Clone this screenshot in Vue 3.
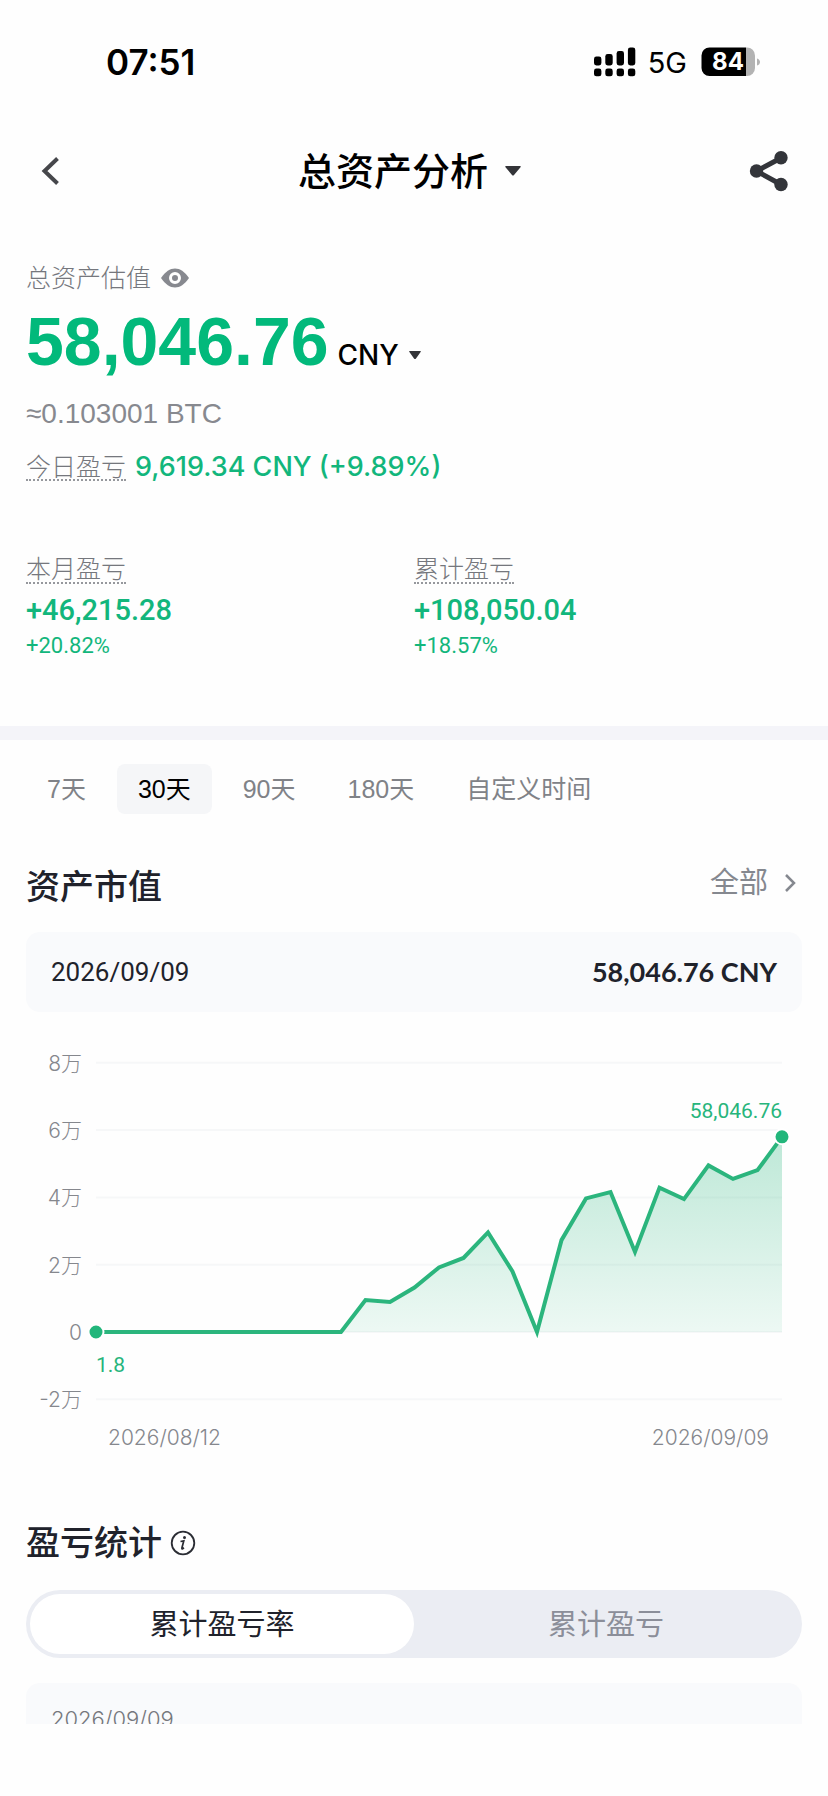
<script setup>
import { ref, computed } from 'vue'

const ranges = ['7天', '30天', '90天', '180天', '自定义时间']
const activeRange = ref('30天')

const modes = ['累计盈亏率', '累计盈亏']
const activeMode = ref('累计盈亏率')

const stats = [
  { label: '本月盈亏', value: '+46,215.28', percent: '+20.82%' },
  { label: '累计盈亏', value: '+108,050.04', percent: '+18.57%' }
]

// 每日资产市值，单位：万
const values = [
  0, 0, 0, 0, 0, 0, 0, 0, 0, 0, 0, 0.95, 0.89, 1.32, 1.92, 2.2, 2.96, 1.8, 0,
  2.73, 3.97, 4.16, 2.38, 4.29, 3.95, 4.95, 4.55, 4.81, 5.8
]

const ticks = [8, 6, 4, 2, 0, -2]
const left = 70
const right = 756
const zeroY = 292

const toX = (i) => left + ((right - left) * i) / (values.length - 1)
const toY = (v) => zeroY - v * 33.65
const tickLabel = (v) => (v === 0 ? '0' : v + '万')

const line = computed(() => values.map((v, i) => `${toX(i)},${toY(v)}`).join(' '))
const area = computed(() => `${left},${zeroY} ${line.value} ${right},${zeroY}`)
</script>

<template>
  <div class="page">
    <div class="status-bar">
      <span class="time">07:51</span>
      <div class="status-right">
        <svg class="signal" width="42" height="30" viewBox="0 0 42 30">
          <rect x="0" y="9.5" width="7.4" height="9" rx="2.4" />
          <rect x="11.3" y="7" width="7.4" height="11.5" rx="2.4" />
          <rect x="22.6" y="4" width="7.4" height="14.5" rx="2.4" />
          <rect x="33.9" y="0.5" width="7.4" height="18" rx="2.4" />
          <rect x="0" y="21.5" width="7.4" height="7.8" rx="2.4" />
          <rect x="11.3" y="21.5" width="7.4" height="7.8" rx="2.4" />
          <rect x="22.6" y="21.5" width="7.4" height="7.8" rx="2.4" />
          <rect x="33.9" y="21.5" width="7.4" height="7.8" rx="2.4" />
        </svg>
        <span class="network">5G</span>
        <svg class="battery" width="60" height="30" viewBox="0 0 60 30">
          <path d="M45 0.5h1a8 8 0 0 1 8 8v12.5a8 8 0 0 1-8 8h-1z" fill="#b3b3b3" />
          <path d="M8.5 0.5H45v28.5H8.5a8 8 0 0 1-8-8V8.5a8 8 0 0 1 8-8z" fill="#000" />
          <path d="M56 11.5c4 1 4 6 0 7z" fill="#b3b3b3" />
          <text x="27" y="23" text-anchor="middle" class="battery-text">84</text>
        </svg>
      </div>
    </div>

    <header class="nav">
      <button class="icon-btn back" aria-label="返回">
        <svg width="20" height="30" viewBox="0 0 20 30">
          <path d="M17.5 2.5L4.5 15l13 12.5" fill="none" stroke="#46474b" stroke-width="4" />
        </svg>
      </button>
      <button class="nav-title">
        <span>总资产分析</span>
        <svg width="16" height="10" viewBox="0 0 16 10">
          <path d="M1 0h14q1.5 0 0.5 1.2L9 9q-1 1-2 0L0.5 1.2Q-0.5 0 1 0z" fill="#333438" />
        </svg>
      </button>
      <button class="icon-btn" aria-label="分享">
        <svg width="40" height="42" viewBox="0 0 40 42">
          <path d="M32 8L7.5 21 32 34.5" fill="none" stroke="#33353a" stroke-width="5" />
          <circle cx="7.5" cy="21" r="6.7" fill="#33353a" />
          <circle cx="32" cy="7.7" r="6.7" fill="#33353a" />
          <circle cx="32" cy="34.5" r="6.7" fill="#33353a" />
        </svg>
      </button>
    </header>

    <section class="summary">
      <div class="summary-label">
        <span>总资产估值</span>
        <button class="icon-btn" aria-label="隐藏金额">
          <svg width="28" height="20" viewBox="0 0 28 20">
            <path
              d="M0 10C4.5 3.5 9 0.5 14 0.5S23.5 3.5 28 10C23.5 16.5 19 19.5 14 19.5S4.5 16.5 0 10z"
              fill="#87898f"
            />
            <circle cx="14" cy="10" r="4.5" fill="#87898f" stroke="#fff" stroke-width="3" />
          </svg>
        </button>
      </div>
      <div class="total">
        <span class="total-value">58,046.76</span>
        <button class="currency">
          <span>CNY</span>
          <svg width="12" height="9" viewBox="0 0 12 9">
            <path d="M0.8 0h10.4q1.2 0 0.4 1L7 7.5q-1 1-2 0L0.4 1Q-0.4 0 0.8 0z" fill="#333438" />
          </svg>
        </button>
      </div>
      <div class="btc">≈0.103001 BTC</div>
      <div class="today">
        <span class="dotted">今日盈亏</span>
        <span class="today-value">9,619.34 CNY (+9.89%)</span>
      </div>
      <div class="stats">
        <div v-for="item in stats" :key="item.label" class="stat">
          <span class="dotted">{{ item.label }}</span>
          <div class="stat-value">{{ item.value }}</div>
          <div class="stat-percent">{{ item.percent }}</div>
        </div>
      </div>
    </section>

    <div class="divider"></div>

    <main class="content">
      <div class="ranges">
        <button
          v-for="range in ranges"
          :key="range"
          class="range"
          :class="{ active: range === activeRange }"
          @click="activeRange = range"
        >
          {{ range }}
        </button>
      </div>

      <div class="section-head">
        <h2>资产市值</h2>
        <a href="#" class="more">
          <span>全部</span>
          <svg width="12" height="20" viewBox="0 0 12 20">
            <path d="M2 2l8 8-8 8" fill="none" stroke="#85888f" stroke-width="2.5" />
          </svg>
        </a>
      </div>

      <div class="value-card">
        <span class="card-date">2026/09/09</span>
        <span class="card-value">58,046.76 CNY</span>
      </div>

      <svg class="chart" viewBox="0 0 776 420">
        <defs>
          <linearGradient id="areaFill" x1="0" y1="0" x2="0" y2="1">
            <stop offset="0" stop-color="#27b57c" stop-opacity="0.3" />
            <stop offset="1" stop-color="#27b57c" stop-opacity="0.08" />
          </linearGradient>
        </defs>
        <g v-for="tick in ticks" :key="tick">
          <line :x1="left" :x2="right" :y1="toY(tick)" :y2="toY(tick)" class="grid" />
          <text x="56" :y="toY(tick) + 8" text-anchor="end" class="axis">{{ tickLabel(tick) }}</text>
        </g>
        <polygon :points="area" fill="url(#areaFill)" />
        <polyline :points="line" class="line" />
        <circle :cx="left" :cy="zeroY" r="7.5" class="dot" />
        <circle :cx="right" :cy="toY(5.8)" r="7.5" class="dot" />
        <text x="70" y="332" class="point">1.8</text>
        <text :x="right" y="78" text-anchor="end" class="point">58,046.76</text>
        <text x="82" y="405" class="axis">2026/08/12</text>
        <text x="743" y="405" text-anchor="end" class="axis">2026/09/09</text>
      </svg>

      <div class="stats-head">
        <h2>盈亏统计</h2>
        <button class="icon-btn" aria-label="说明">
          <svg width="26" height="26" viewBox="0 0 26 26">
            <circle cx="13" cy="13" r="11.3" fill="none" stroke="#2a2c33" stroke-width="1.8" />
            <circle cx="14.5" cy="7.5" r="1.5" fill="#2a2c33" />
            <path
              d="M10.5 11.5l3.3-0.7-1.9 7.2q-0.2 1.2 0.8 0.7l1.3-0.9"
              fill="none"
              stroke="#2a2c33"
              stroke-width="1.7"
            />
          </svg>
        </button>
      </div>

      <div class="segmented">
        <button
          v-for="mode in modes"
          :key="mode"
          class="segment"
          :class="{ active: mode === activeMode }"
          @click="activeMode = mode"
        >
          {{ mode }}
        </button>
      </div>

      <div class="peek-card">2026/09/09</div>
    </main>
  </div>
</template>

<style>
body {
  margin: 0;
  background: #fefefe;
}
</style>

<style scoped>
.page {
  padding-bottom: 72px;
  font-family: 'Liberation Sans', 'Noto Sans CJK SC', sans-serif;
  color: #000;
  background: #fefefe;
}

button {
  margin: 0;
  padding: 0;
  border: none;
  background: none;
  font: inherit;
  color: inherit;
  cursor: pointer;
}

svg {
  display: block;
}

h2 {
  margin: 0;
  font-size: 34px;
  font-weight: 500;
  line-height: 44px;
  color: #20222b;
}

.status-bar {
  display: flex;
  justify-content: space-between;
  align-items: center;
  height: 124px;
  padding: 0 67px 0 106px;
}

.time {
  font-family: Inter, sans-serif;
  font-size: 35px;
  font-weight: 600;
}

.status-right {
  display: flex;
  align-items: center;
}

.network {
  margin: 0 14px 0 12px;
  font-family: Inter, sans-serif;
  font-size: 29px;
}

.battery-text {
  font-family: Inter, sans-serif;
  font-size: 24px;
  font-weight: 700;
  fill: #fff;
}

.nav {
  display: flex;
  justify-content: space-between;
  align-items: center;
  height: 94px;
  padding: 0 39px 0 40px;
}

.back {
  padding-right: 10px;
}

.nav-title {
  display: flex;
  align-items: center;
  gap: 17px;
  font-size: 38px;
  font-weight: 500;
}

.nav-title span {
  padding-bottom: 6px;
}

.summary {
  padding: 42px 26px 66px;
}

.summary-label {
  display: flex;
  align-items: center;
  gap: 10px;
  font-size: 25px;
  font-weight: 300;
  line-height: 36px;
  color: #75777d;
}

.total {
  display: flex;
  align-items: baseline;
  gap: 9px;
  height: 72px;
  margin-top: 9px;
}

.total-value {
  font-size: 68px;
  font-weight: 700;
  line-height: 72px;
  color: #02b97b;
}

.currency {
  display: flex;
  align-items: center;
  gap: 10px;
  font-family: Inter, sans-serif;
  font-size: 28px;
  font-weight: 500;
  line-height: 36px;
}

.btc {
  margin-top: 19px;
  font-size: 28px;
  line-height: 36px;
  color: #87898f;
}

.today {
  display: flex;
  align-items: center;
  gap: 9px;
  height: 36px;
  margin-top: 16px;
}

.dotted {
  display: inline-block;
  padding-top: 4px;
  border-bottom: 2px dotted #96989d;
  font-size: 25px;
  font-weight: 300;
  line-height: 24px;
  color: #75777d;
}

.today-value {
  font-family: Inter, sans-serif;
  font-size: 27px;
  font-weight: 500;
  color: #12b67c;
}

.stats {
  display: grid;
  grid-template-columns: 1fr 1fr;
  margin-top: 70px;
  font-family: Roboto, 'Noto Sans CJK SC', sans-serif;
  color: #12b67c;
}

.stat {
  display: flex;
  flex-direction: column;
  align-items: flex-start;
}

.stat-value {
  margin-top: 8px;
  font-size: 29px;
  font-weight: 500;
  line-height: 36px;
}

.stat-percent {
  margin-top: 4px;
  font-size: 22px;
  line-height: 28px;
}

.divider {
  height: 14px;
  background: #f4f4f9;
}

.content {
  padding: 24px 26px 0;
}

.ranges {
  display: flex;
  gap: 10px;
}

.range {
  height: 50px;
  padding: 0 21px 4px;
  border-radius: 8px;
  font-size: 25px;
  color: #808287;
}

.range.active {
  background: #f5f6f8;
  color: #000;
}

.section-head {
  display: flex;
  justify-content: space-between;
  align-items: flex-start;
  margin-top: 51px;
}

.more {
  display: flex;
  align-items: center;
  gap: 16px;
  padding-right: 6px;
  font-size: 29px;
  line-height: 36px;
  color: #85888f;
  text-decoration: none;
}

.value-card {
  display: flex;
  justify-content: space-between;
  align-items: center;
  height: 80px;
  margin-top: 23px;
  padding: 0 25px;
  border-radius: 14px;
  background: #f9fafc;
  color: #20222b;
}

.card-date {
  font-family: Roboto, sans-serif;
  font-size: 26px;
}

.card-value {
  padding-bottom: 2px;
  font-family: Lato, sans-serif;
  font-size: 27px;
  font-weight: 700;
}

.chart {
  width: 100%;
  margin-top: 28px;
}

.grid {
  stroke: #f6f7f8;
  stroke-width: 2;
}

.axis {
  font-family: Inter, 'Noto Sans CJK SC', sans-serif;
  font-size: 21px;
  font-weight: 300;
  fill: #85878d;
}

.point {
  font-family: Roboto, sans-serif;
  font-size: 21px;
  fill: #27b57c;
}

.line {
  fill: none;
  stroke: #2bb57d;
  stroke-width: 4;
}

.dot {
  fill: #22b67b;
  stroke: #fff;
  stroke-width: 2;
}

.stats-head {
  display: flex;
  align-items: center;
  gap: 8px;
  margin-top: 61px;
}

.segmented {
  display: grid;
  grid-template-columns: 1fr 1fr;
  height: 60px;
  margin-top: 25px;
  padding: 4px;
  border-radius: 34px;
  background: #ebedf3;
}

.segment {
  padding-bottom: 4px;
  border-radius: 30px;
  font-size: 29px;
  color: #8b8e99;
}

.segment.active {
  background: #fff;
  color: #20222b;
}

.peek-card {
  height: 21px;
  margin-top: 25px;
  padding: 20px 25px 0;
  border-radius: 14px 14px 0 0;
  background: #f9fafc;
  overflow: hidden;
  font-family: Inter, sans-serif;
  font-size: 22px;
  font-weight: 300;
  line-height: 32px;
  color: #75777d;
}
</style>
